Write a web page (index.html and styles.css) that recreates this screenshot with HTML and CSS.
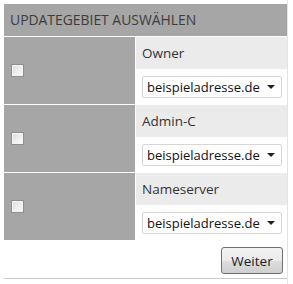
FILE: index.html
```html
<!DOCTYPE html>
<html lang="de">
<head>
    <meta charset="UTF-8">
    <title>Updategebiet auswählen</title>
    <link rel="stylesheet" href="styles.css">
</head>
<body>

<div class="frame">
    <div class="panel">
        <div class="panel-head">Updategebiet auswählen</div>

        <!-- Owner -->
        <div class="area-row">
            <div class="area-check"><input type="checkbox" class="check"></div>
            <div class="area-body">
                <div class="area-label">Owner</div>
                <div class="area-field">
                    <div class="select"><span>beispieladresse.de</span><i class="caret"></i></div>
                </div>
            </div>
        </div>

        <!-- Admin-C -->
        <div class="area-row">
            <div class="area-check"><input type="checkbox" class="check"></div>
            <div class="area-body">
                <div class="area-label">Admin-C</div>
                <div class="area-field">
                    <div class="select"><span>beispieladresse.de</span><i class="caret"></i></div>
                </div>
            </div>
        </div>

        <!-- Nameserver -->
        <div class="area-row">
            <div class="area-check"><input type="checkbox" class="check"></div>
            <div class="area-body">
                <div class="area-label">Nameserver</div>
                <div class="area-field">
                    <div class="select"><span>beispieladresse.de</span><i class="caret"></i></div>
                </div>
            </div>
        </div>

        <div class="actions">
            <button type="button" class="btn">Weiter</button>
        </div>
    </div>
</div>

</body>
</html>
```

FILE: styles.css
```css
html, body {
    margin: 0;
    padding: 0;
    height: 100%;
    background: #fff;
}

body {
    font-family: "Open Sans", "Liberation Sans", sans-serif;
    color: #333;
}

.frame {
    width: 287px;
    height: 100%;
    border-right: 1px solid #e3e3e3;
}

.panel {
    margin-left: 4px;
    padding-top: 4px;
    width: 283px;
    display: flex;
    flex-direction: column;
    gap: 1px;
    border-bottom: 1px solid #c8c8c8;
}

.panel-head {
    background: #a6a6a6;
    height: 32px;
    line-height: 32px;
    padding-left: 6px;
    font-size: 13.9px;
    text-transform: uppercase;
    color: #3c3c3c;
}

.area-row {
    display: grid;
    grid-template-columns: 131px 1fr;
    gap: 1px;
    height: 67px;
}

.area-check {
    background: #a6a6a6;
    display: flex;
    align-items: center;
    padding-left: 7px;
}

.check {
    appearance: none;
    -webkit-appearance: none;
    margin: 0;
    width: 13px;
    height: 13px;
    border: 1px solid #8e8f8f;
    background: linear-gradient(135deg, #dcdcdc, #fefefe);
    box-shadow: inset 0 0 0 1px #f4f4f4;
}

.area-body {
    display: flex;
    flex-direction: column;
}

.area-label {
    background: #ebebeb;
    height: 32px;
    line-height: 32px;
    padding-left: 6px;
    font-size: 13.5px;
}

.area-field {
    flex: 1;
    background: #fff;
    display: flex;
    align-items: center;
    padding-left: 6px;
    padding-right: 5px;
}

.select {
    flex: 1;
    height: 20px;
    border: 1px solid #d6d6d6;
    border-radius: 2px;
    display: flex;
    align-items: center;
    justify-content: space-between;
    padding: 0 6px 0 4px;
    font-size: 13px;
    color: #111;
}

.caret {
    width: 0;
    height: 0;
    border-left: 4px solid transparent;
    border-right: 4px solid transparent;
    border-top: 4px solid #222;
}

.actions {
    display: flex;
    justify-content: flex-end;
    padding: 6px 4px 4px 0;
}

.btn {
    font-family: inherit;
    font-size: 13.5px;
    color: #222;
    width: 62px;
    height: 27px;
    border: 1px solid #707070;
    border-radius: 3px;
    background: linear-gradient(#f2f2f2 0%, #ebebeb 50%, #dddddd 51%, #cfcfcf 100%);
    padding: 0;
}
```
